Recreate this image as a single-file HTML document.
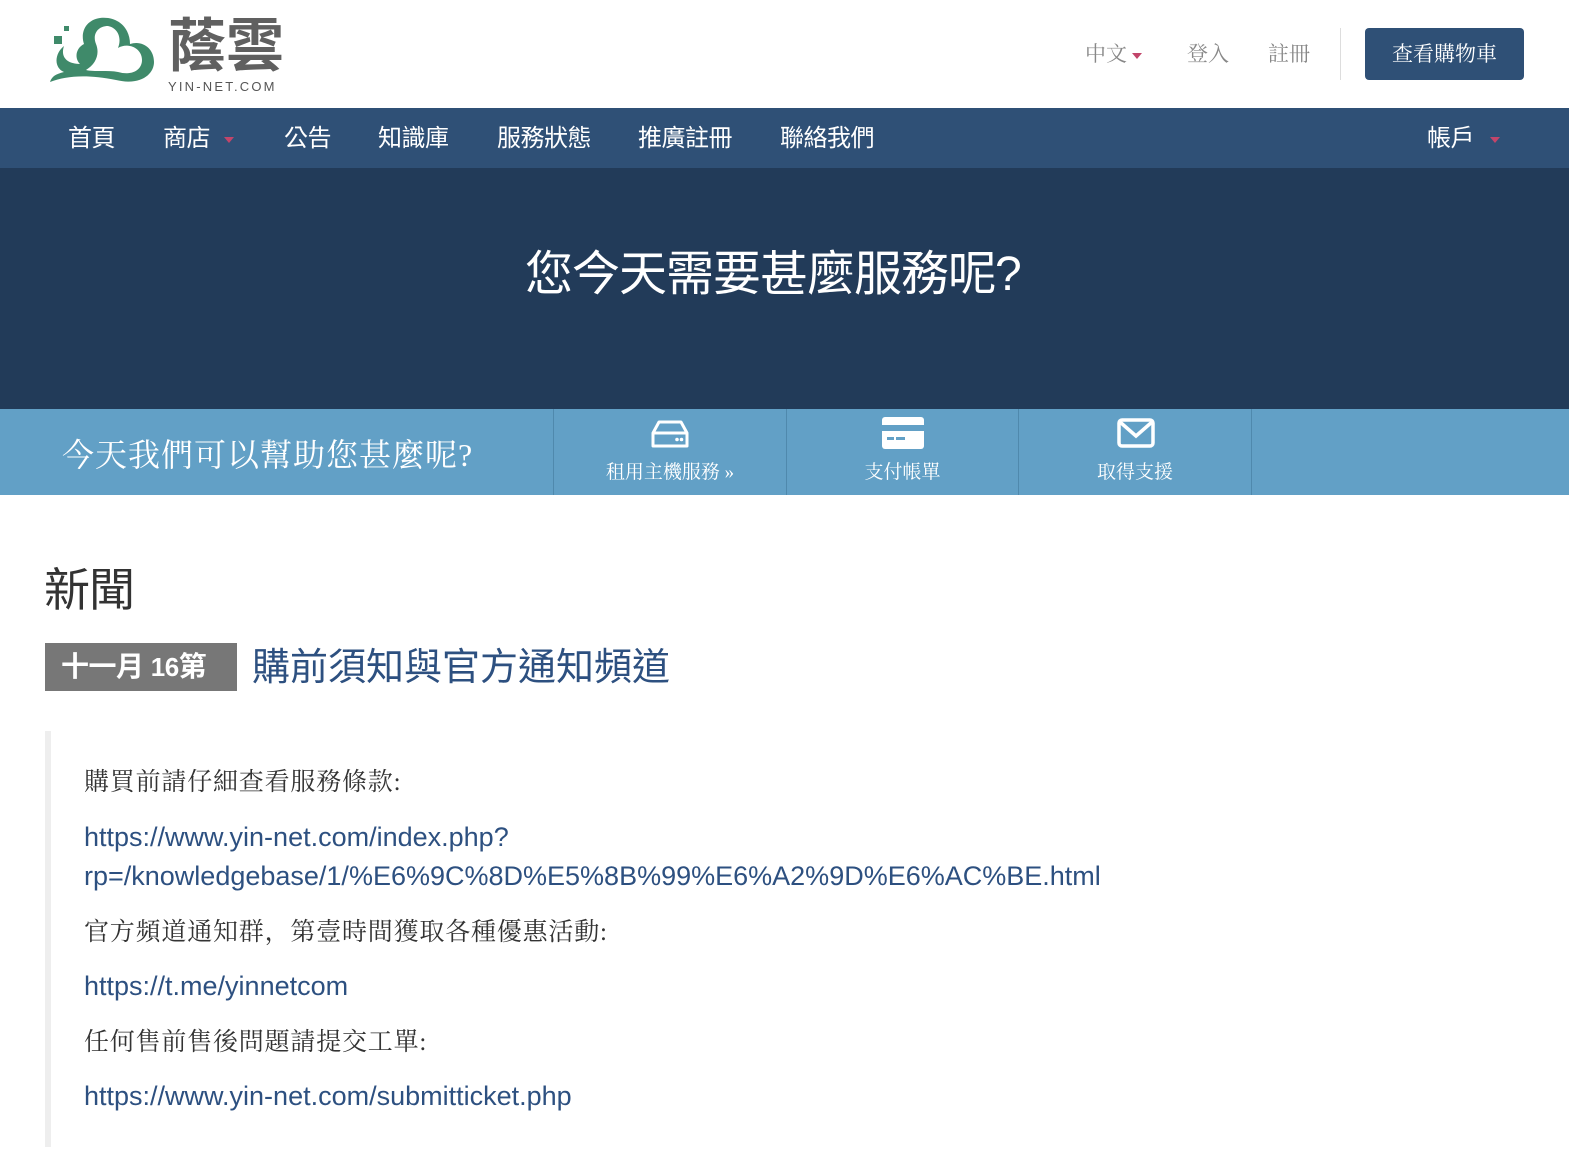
<!DOCTYPE html>
<html><head><meta charset="utf-8"><style>
*{margin:0;padding:0;box-sizing:border-box}
body{width:1569px;height:1174px;background:#fff;font-family:"Liberation Sans","Noto Sans CJK TC",sans-serif;position:relative;overflow:hidden}
.a{position:absolute;white-space:nowrap}
.caret{display:inline-block;width:0;height:0;border-left:5px solid transparent;border-right:5px solid transparent;border-top:6px solid #c2456a;vertical-align:middle}
.top{color:#888;font-size:21px;font-family:"Liberation Serif","Noto Serif CJK SC",serif}
.nav{color:#fff;font-size:24px;top:118px;letter-spacing:-0.5px}
.serif{font-family:"Liberation Serif","Noto Serif CJK SC",serif}
.lnk{color:#2d5080;font-size:27px;font-family:"Liberation Sans",sans-serif;letter-spacing:0px}
.txt{color:#333;font-size:25px;font-family:"Liberation Serif","Noto Serif CJK SC",serif;letter-spacing:0.8px}
</style></head><body>
<svg class="a" style="left:46px;top:14px" width="112" height="82" viewBox="0 0 112 82">
<path d="M4 68 C 20 62, 40 60, 70 66 C 95 72, 108 60, 108 48 C 108 34, 96 26, 84 30 C 84 14, 72 2, 54 4 C 40 6, 34 18, 38 30 C 30 34, 28 44, 34 50 C 22 50, 14 44, 18 32 C 8 40, 8 54, 18 58 C 10 60, 6 62, 4 68 Z M50 30 C 46 20, 52 12, 62 12 C 72 14, 76 24, 72 34 C 82 28, 96 34, 96 46 C 96 56, 86 62, 72 58 C 62 56, 48 58, 40 56 C 50 50, 54 40, 50 30 Z" fill="#3f8a6a" fill-rule="evenodd"/>
<rect x="18" y="12" width="5" height="5" fill="#3f8a6a"/><rect x="8" y="22" width="8" height="8" fill="#3f8a6a"/>
</svg>
<div class="a" style="left:168px;top:18px;font-size:58px;font-weight:bold;color:#606060;line-height:1">蔭雲</div>
<div class="a" style="left:168px;top:79px;font-size:13px;color:#555;letter-spacing:2.2px">YIN-NET.COM</div>
<div class="a top" style="left:1085px;top:38px">中文 <span class="caret"></span></div>
<div class="a top" style="left:1187px;top:38px">登入</div>
<div class="a top" style="left:1268px;top:38px">註冊</div>
<div class="a" style="left:1340px;top:28px;width:1px;height:52px;background:#ddd"></div>
<div class="a" style="left:1365px;top:28px;width:159px;height:52px;background:#2f5076;border-radius:4px;color:#fff;font-size:21px;line-height:52px;text-align:center"><span class="serif">查看購物車</span></div>
<div class="a" style="left:0;top:108px;width:1569px;height:60px;background:#2f5076"></div>
<div class="a nav" style="left:68px">首頁</div>
<div class="a nav" style="left:163px">商店 <span class="caret" style="margin-left:8px"></span></div>
<div class="a nav" style="left:284px">公告</div>
<div class="a nav" style="left:378px">知識庫</div>
<div class="a nav" style="left:497px">服務狀態</div>
<div class="a nav" style="left:638px">推廣註冊</div>
<div class="a nav" style="left:780px">聯絡我們</div>
<div class="a nav" style="left:1427px">帳戶 <span class="caret" style="margin-left:10px"></span></div>
<div class="a" style="left:0;top:168px;width:1569px;height:241px;background:#223b59"></div>
<div class="a" style="left:525px;top:234px;width:500px;color:#fff;font-size:48px;letter-spacing:-1px">您今天需要甚麼服務呢?</div>
<div class="a" style="left:0;top:409px;width:1569px;height:86px;background:#62a0c6"></div>
<div class="a serif" style="left:62px;top:430px;color:#fff;font-size:32px;letter-spacing:1px">今天我們可以幫助您甚麼呢?</div>
<div class="a" style="left:553px;top:409px;width:1px;height:86px;background:#4f89ad"></div>
<div class="a" style="left:786px;top:409px;width:1px;height:86px;background:#4f89ad"></div>
<div class="a" style="left:1018px;top:409px;width:1px;height:86px;background:#4f89ad"></div>
<div class="a" style="left:1251px;top:409px;width:1px;height:86px;background:#4f89ad"></div>
<svg class="a" style="left:650px;top:419px" width="40" height="30" viewBox="0 0 40 30"><path d="M3 14 L9 3 H31 L37 14 V27 H3 Z M3 14 H37" fill="none" stroke="#fff" stroke-width="3" stroke-linejoin="round"/><circle cx="27" cy="20.5" r="1.8" fill="#fff"/><circle cx="31.5" cy="20.5" r="1.8" fill="#fff"/></svg>
<svg class="a" style="left:882px;top:417px" width="42" height="32" viewBox="0 0 42 32"><rect x="0" y="0" width="42" height="32" rx="3" fill="#fff"/><rect x="0" y="8" width="42" height="6" fill="#62a0c6"/><rect x="5" y="20" width="7" height="3" fill="#62a0c6"/><rect x="14" y="20" width="9" height="3" fill="#62a0c6"/></svg>
<svg class="a" style="left:1117px;top:418px" width="38" height="30" viewBox="0 0 38 30"><rect x="2" y="2" width="34" height="26" rx="3" fill="none" stroke="#fff" stroke-width="3.5"/><path d="M3 4 L19 18 L35 4" fill="none" stroke="#fff" stroke-width="3.5"/></svg>
<div class="a serif" style="left:554px;width:232px;top:457px;text-align:center;color:#fff;font-size:19px">租用主機服務 »</div>
<div class="a serif" style="left:787px;width:231px;top:457px;text-align:center;color:#fff;font-size:19px">支付帳單</div>
<div class="a serif" style="left:1019px;width:232px;top:457px;text-align:center;color:#fff;font-size:19px">取得支援</div>
<div class="a" style="left:44px;top:554px;font-size:46px;color:#333;letter-spacing:-1px">新聞</div>
<div class="a" style="left:45px;top:643px;width:192px;height:48px;background:#777;color:#fff;font-size:28px;font-weight:bold;line-height:48px;padding-left:16px;letter-spacing:-0.5px">十一月 <span style="font-size:26px">16</span>第</div>
<div class="a" style="left:252px;top:636px;color:#2d5080;font-size:38px;letter-spacing:0px">購前須知與官方通知頻道</div>
<div class="a" style="left:45px;top:731px;width:6px;height:416px;background:#eee"></div>
<div class="a txt" style="left:84px;top:762px">購買前請仔細查看服務條款:</div>
<div class="a lnk" style="left:84px;top:822px">https://www.yin-net.com/index.php?</div>
<div class="a lnk" style="left:84px;top:861px">rp=/knowledgebase/1/%E6%9C%8D%E5%8B%99%E6%A2%9D%E6%AC%BE.html</div>
<div class="a txt" style="left:84px;top:912px">官方頻道通知群，第壹時間獲取各種優惠活動:</div>
<div class="a lnk" style="left:84px;top:971px">https://t.me/yinnetcom</div>
<div class="a txt" style="left:84px;top:1022px">任何售前售後問題請提交工單:</div>
<div class="a lnk" style="left:84px;top:1081px">https://www.yin-net.com/submitticket.php</div>
</body></html>
